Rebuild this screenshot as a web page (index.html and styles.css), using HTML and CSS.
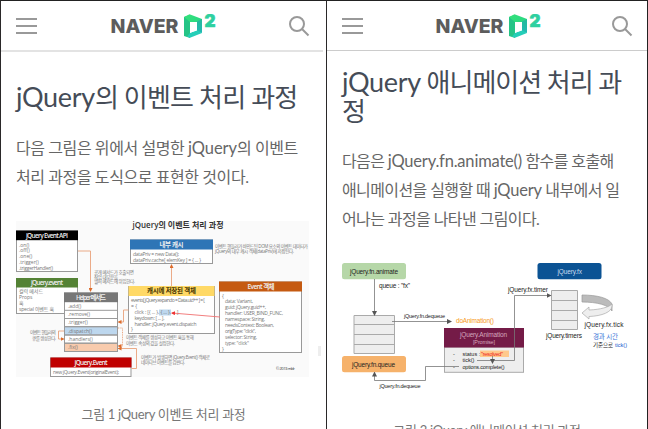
FILE: index.html
```html
<!DOCTYPE html>
<html lang="ko">
<head>
<meta charset="utf-8">
<title>NAVER D2</title>
<link rel="stylesheet" href="styles.css">
</head>
<body>
<svg class="defs" aria-hidden="true">
  <defs>
    <linearGradient id="gTop" x1="0" y1="0" x2="1" y2="0.3"><stop offset="0" stop-color="#35e27a"/><stop offset="1" stop-color="#2bd982"/></linearGradient>
    <linearGradient id="gSide" x1="0" y1="0" x2="0" y2="1"><stop offset="0" stop-color="#25ba99"/><stop offset="1" stop-color="#22b9b4"/></linearGradient>
    <symbol id="logo" viewBox="0 0 106 26">
      <text class="brand" x="0.500" y="19" textLength="68" lengthAdjust="spacingAndGlyphs">NAVER</text>
      <path fill="#25c486" d="M74 3l6-2v6.500l0 11.500 0 5-6-2z"/>
      <path fill="url(#gTop)" d="M74 3l5.500-2.800L92 5v3l-12 0z"/>
      <path fill="url(#gSide)" d="M87 7.500L92 5v14l-5-1.500z"/>
      <path fill="#25ceb8" d="M80 19l7-3 5 3-12 4.700-3-1.200z"/>
      <path fill="#fff" d="M80 8l7 1.500v7L80 18.800z"/>
      <text class="two" x="94.500" y="12.800" textLength="11" lengthAdjust="spacingAndGlyphs">2</text>
    </symbol>
    <symbol id="search" viewBox="0 0 22 22"><circle cx="9" cy="9" r="7"/><path d="M14 14l6.500 6.500"/></symbol>
    <marker id="mo" markerWidth="4" markerHeight="4" refX="3" refY="2" orient="auto" markerUnits="userSpaceOnUse"><path class="tip-o" d="M0 0l4 2-4 2z"/></marker>
    <marker id="mr" markerWidth="4" markerHeight="4" refX="3" refY="2" orient="auto" markerUnits="userSpaceOnUse"><path class="tip-r" d="M0 0l4 2-4 2z"/></marker>
    <marker id="mg" markerWidth="5" markerHeight="5" refX="4" refY="2.500" orient="auto" markerUnits="userSpaceOnUse"><path d="M0 0l5 2.500-5 2.500z" fill="#555"/></marker>
  </defs>
</svg>
<main class="phones">
  <section class="phone left">
    <header class="bar">
      <span class="menu"><i></i><i></i><i></i></span>
      <svg class="logo"><use href="#logo"/></svg>
      <svg class="search"><use href="#search"/></svg>
    </header>
    <article>
      <h2 class="h-one"><span class="en">jQuery</span>의 이벤트 처리 과정</h2>
      <p class="p-one"><span class="l1">다음 그림은 위에서 설명한 <span class="en">jQuery</span>의 이벤트</span><br><span class="l2">처리 과정을 도식으로 표현한 것이다.</span></p>
      <figure>
        <svg class="fig-one" viewBox="16 221 293 156">
          <rect x="16" y="221" width="293" height="156" fill="#fafafa"/>
          <text class="title" x="132.500" y="228.300" textLength="91" lengthAdjust="spacingAndGlyphs">jQuery의 이벤트 처리 과정</text>
          <g class="box">
            <rect x="16.500" y="231" width="61" height="40.500"/><rect x="16.500" y="278.500" width="61" height="35"/>
            <rect x="130.500" y="240" width="82" height="23.500"/><rect x="128.500" y="286.500" width="86" height="47"/>
            <rect x="219.500" y="282" width="82" height="70.500"/><rect x="50.500" y="358" width="80.500" height="18.500"/>
            <rect x="64.500" y="293" width="53" height="58.500"/>
            <rect class="blue" x="64.500" y="326.700" width="53" height="8.300"/><rect class="peach" x="64.500" y="343.200" width="53" height="8.300"/>
            <path d="M64.500 310.300h53M64.500 318.500h53M64.500 326.700h53M64.500 335h53M64.500 343.200h53"/>
          </g>
          <rect x="16" y="230.500" width="62" height="9.700" fill="#000"/>
          <rect x="16" y="278" width="62" height="9.500" fill="#548235"/>
          <rect x="64" y="292.500" width="54" height="9.700" fill="#777"/>
          <rect x="130" y="239.500" width="83" height="10" fill="#2e75b6"/>
          <rect x="128.500" y="286" width="86" height="10" fill="#ffd966"/>
          <rect x="219" y="281.500" width="83" height="10" fill="#c55a11"/>
          <rect x="50.500" y="357.500" width="81" height="10" fill="#c00000"/>
          <rect x="159" y="309.500" width="12" height="6" fill="#bdd7ee"/>
          <g class="head">
            <text x="47" y="237.500" textLength="42">jQuery Event API</text><text x="47" y="285" textLength="32">jQuery.event</text>
            <text x="91" y="299.500" textLength="30">Helper 메서드</text><text x="171.500" y="246.800" textLength="24">내부 캐시</text>
            <text x="171.500" y="293.200" textLength="49" class="dark">캐시에 저장된 객체</text><text x="261" y="288.700" textLength="27">Event 객체</text>
            <text x="91" y="364.800" textLength="33">jQuery.Event</text>
          </g>
          <g class="tiny">
            <text x="19" y="246.500">.on()</text><text x="19" y="252.300">.off()</text><text x="19" y="258">.one()</text><text x="19" y="263.800">.trigger()</text><text x="19" y="269.500" textLength="34">.triggerHandler()</text>
            <text x="19" y="293.300" textLength="24">컬럭 메서드</text><text x="19" y="299.300">Props</text><text x="19" y="305">훅</text><text x="19" y="311" textLength="35">special 이벤트 훅</text>
            <text x="68" y="307.800">.add()</text><text x="68" y="316.200">.remove()</text><text x="68" y="324.300">.trigger()</text><text x="68" y="332.500">.dispatch()</text><text x="68" y="340.800">.handlers()</text><text x="68" y="349">.fix()</text>
            <text x="133" y="255.500" textLength="46">dataPriv = new Data();</text><text x="133" y="261.500" textLength="68">dataPriv.cache[ elemKey ] = { ... }</text>
            <text x="131" y="302.300" textLength="74">events[ jQuery.expando = Data.uid++ ] = [</text><text x="131" y="308">= {</text><text x="134.500" y="314" textLength="45">click : [{ ... }, { ... }, ... ],</text><text x="134.500" y="319.700" textLength="30">keydown: [ ... ],</text><text x="134.500" y="325.500" textLength="62">handler: jQuery.event.dispatch</text><text x="131" y="331">}</text>
            <text x="222" y="297.500">{</text><text x="225" y="303.200" textLength="28">data: Variant,</text><text x="225" y="309" textLength="41">guid: jQuery.guid++,</text><text x="225" y="315" textLength="58">handler: USER_BIND_FUNC,</text><text x="225" y="321" textLength="40">namespace: String,</text><text x="225" y="327" textLength="49">needsContext: Boolean,</text><text x="225" y="333" textLength="31">origType: "click",</text><text x="225" y="339" textLength="32">selector: String,</text><text x="225" y="345" textLength="24">type: "click"</text><text x="222" y="351">}</text>
            <text x="53" y="374" textLength="66">new jQuery.Event(originalEvent);</text>
            <text x="276" y="370.300" textLength="19" class="strong">© 2013 mIdr</text>
          </g>
          <g class="note">
            <text x="94" y="273.500" textLength="40">공개 메서드가 호출되면</text><text x="94" y="278.500" textLength="24">작업 대부분을</text><text x="94" y="283" textLength="41">헬퍼 메서드에 위임한다.</text>
            <text x="215" y="247.500" textLength="93">이벤트 핸들러가 바인드된 DOM 요소의 이벤트 데이터가</text><text x="215" y="253" textLength="79">jQuery의 내부 캐시 객체(dataPriv)에 저장된다.</text>
            <text x="30" y="334" textLength="26">이벤트 핸들러의</text><text x="32" y="339.500" textLength="24">큐를 생성한다.</text>
            <text x="126" y="339" textLength="68">이벤트 객체를 생성하고 이벤트 훅을 통해</text><text x="126" y="344.500" textLength="49">이벤트 속성의 값을 설정한다.</text>
            <text x="141" y="358.500" textLength="69">이벤트가 발생하면 jQuery.Event() 객체로</text><text x="141" y="364" textLength="44">네이티브 이벤트를 감싼다.</text>
          </g>
          <g class="orange">
            <path d="M78 251h12.500v40"/><path d="M171.500 286v-21"/><path d="M128.500 310h-5v12h-5"/><path d="M64 331h-5.500v8h5"/><path stroke-dasharray="1 .7" d="M118 328h4.500v18h-4"/><path d="M131.500 368.500h5V348.500h-18"/>
            <path class="red" d="M220 317l-48-4"/>
          </g>
        </svg>
        <figcaption class="c-one">그림 1 jQuery 이벤트 처리 과정</figcaption>
      </figure>
    </article>
    <span class="thumb"></span>
  </section>
  <section class="phone right">
    <header class="bar">
      <span class="menu"><i></i><i></i><i></i></span>
      <svg class="logo"><use href="#logo"/></svg>
      <svg class="search"><use href="#search"/></svg>
    </header>
    <article>
      <h2 class="h-two"><span class="en">jQuery</span> 애니메이션 처리 과<br>정</h2>
      <p class="p-two"><span class="r1">다음은 <span class="en">jQuery.fn.animate()</span> 함수를 호출해</span><br><span class="r2">애니메이션을 실행할 때 <span class="en">jQuery</span> 내부에서 일</span><br><span class="r3">어나는 과정을 나타낸 그림이다.</span></p>
      <figure>
        <svg class="fig-two" viewBox="342 263 290 127">
          <rect x="342" y="263" width="64" height="16.300" rx="2.500" fill="#b6d7a8"/>
          <rect x="342" y="356" width="64" height="16.300" rx="2.500" fill="#f6b26b"/>
          <rect x="537.500" y="263" width="64" height="16.300" rx="2.500" fill="#0b5394"/>
          <g class="grid"><path d="M354 315.500h40.500v38h-40.500zM354 324.500h40.500M354 334.500h40.500M354 344.500h40.500"/><path d="M551.500 290.500h26v39h-26zM551.500 300.500h26M551.500 310.500h26M551.500 320.500h26"/></g>
          <rect x="444.500" y="347" width="79" height="25.300" fill="#eee" stroke="#aaa"/>
          <rect x="444" y="328" width="80" height="19.500" fill="#741b47"/>
          <rect x="480" y="350.500" width="29" height="6.500" fill="#ffc98b"/>
          <path d="M582 295c15 0 27 3 30 9v7c-3-6-15-9-30-9z" fill="#bbb" stroke="#999" stroke-width=".7"/>
          <path d="M612 306c0 6-10 10-23 10.500v2.500l-7-6 7-6v3c12-.5 20-3 23-6z" fill="#eee" stroke="#aaa" stroke-width=".7"/>
          <g class="wire"><path d="M374.500 279v36"/><path d="M392 321.500h59"/><path d="M459 366.500h-33.500v14h-51v-8"/><path d="M477 360.500h37.500v-65h36"/><path d="M492.500 356v7"/></g>
          <g class="lab">
            <text x="350" y="273.500" textLength="48">jQuery.fn.animate</text><text x="352" y="366.500" textLength="43">jQuery.fn.queue</text><text x="557.500" y="273.500" textLength="24.500" fill="#c8dcf0">jQuery.fx</text>
            <text x="379" y="288" textLength="31">queue : "fx"</text><text x="404" y="317.500" textLength="41" class="sm">jQuery.fn.dequeue</text><text x="379.500" y="387.500" textLength="41" class="sm">jQuery.fn.dequeue</text>
            <text x="456" y="323" textLength="38" class="do">doAnimation()</text><text x="508" y="291.500" textLength="40">jQuery.fx.timer</text><text x="546" y="337.500" textLength="36">jQuery.timers</text><text x="584.500" y="327" textLength="39">jQuery.fx.tick</text>
            <text x="460" y="337" textLength="47" class="pink">jQuery.Animation</text><text x="473" y="343.700" textLength="22" class="pink sm">[Promise]</text>
            <text class="sm" x="453" y="356">-</text><text class="sm" x="453" y="362.300">-</text><text class="sm" x="453" y="368.500">-</text>
            <text class="sm" x="462.500" y="356">status :</text><text class="sm red" x="481" y="356" textLength="22">"resolved"</text><text class="sm" x="462.500" y="362.300">tick()</text><text class="sm" x="462.500" y="368.700" textLength="42">options.complete()</text>
            <text x="593" y="339.300" textLength="25" fill="#3c78d8">경과 시간</text><text class="sm" x="593" y="347" textLength="20">기준으로</text><text class="sm" x="615" y="347" textLength="12" fill="#1155cc">tick()</text>
          </g>
        </svg>
        <figcaption class="c-two">그림 2 jQuery 애니메이션 처리 과정</figcaption>
      </figure>
    </article>
  </section>
</main>
</body>
</html>
```

FILE: styles.css
```css
* { box-sizing: border-box; }
body { margin: 0; width: 648px; height: 429px; overflow: hidden; background: #fff; font-family: Lato, "Noto Sans CJK KR", sans-serif; }
.defs { position: absolute; width: 0; height: 0; }
.phones { display: grid; grid-template-columns: 326px 322px; height: 429px; }
.phone { position: relative; height: 429px; overflow: hidden; border-top: 1px solid #222; border-left: 1px solid #2a2829; }
.right { border-right: 1px solid #222; }
.bar { display: flex; align-items: flex-start; height: 51px; padding: 13px 15px 0; border-bottom: 2px solid #e3e3e3; }
.left .bar { width: 322px; padding-right: 13px; }
.right .bar { height: 50px; padding-right: 14px; border-bottom: 1px solid #ccc; }
.menu { display: flex; flex-direction: column; gap: 5px; width: 21px; margin-top: 4px; }
.menu i { height: 2px; background: #999; }
.logo { width: 106px; height: 26px; margin-left: 73px; }
.right .logo { margin-left: 72px; }
.search { width: 22px; height: 22px; margin-left: auto; margin-top: 1px; fill: none; stroke: #999; stroke-width: 2; }
.brand { font: 800 19px Inter, sans-serif; fill: #5c5c5c; }
.two { font: 900 17px Inter, sans-serif; fill: #2fd0a0; stroke: #2fd0a0; stroke-width: .6; }
article { padding: 0 15px; }
h2 { margin: 0; font-weight: 400; color: #454c57; white-space: nowrap; font-size: 26px; line-height: 29px; }
.en { line-height: 1; }
.h-one { padding-top: 31px; letter-spacing: -.8px; }
.h-two { padding-top: 17px; letter-spacing: -1px; }
h2 .en { font-size: 27px; letter-spacing: -.3px; }
p { margin: 0; color: #666; font-size: 16px; line-height: 29px; white-space: nowrap; letter-spacing: -.42px; }
p .en { font-size: 16.500px; letter-spacing: -.05px; }
.p-one { padding-top: 21px; }
.p-two { padding-top: 20px; letter-spacing: -.6px; }
.p-two .en { letter-spacing: -.2px; }
figure { margin: 0; }
figure svg { display: block; }
.fig-one { width: 293px; height: 156px; margin-top: 30px; }
.fig-two { width: 290px; height: 127px; margin-top: 30px; }
figcaption { text-align: center; font-size: 13px; line-height: 20px; color: #777; letter-spacing: -.3px; white-space: nowrap; }
.c-one { padding-top: 27px; }
.c-two { padding-top: 30px; }
.thumb { position: absolute; left: 317px; top: 345px; width: 3px; height: 10px; background: #eee; }
.fig-one text { font-family: "Open Sans", "Noto Sans CJK KR", sans-serif; }
.title { font-size: 8.500px; font-weight: 600; fill: #333; }
.box * { fill: #fff; stroke: #999; stroke-width: 1; }
.box path { fill: none; }
.box .blue { fill: #bdd7ee; }
.box .peach { fill: #f8cbad; }
.head { font-size: 6.500px; font-weight: 600; fill: #eee; text-anchor: middle; }
.head .dark { fill: #443300; }
.tiny { font-size: 5px; fill: #777; }
.tiny .strong { font-size: 4px; fill: #333; }
.note { font-size: 4.500px; fill: #777; }
.orange path { fill: none; stroke: #e9a27a; stroke-width: .9; marker-end: url(#mo); }
.orange .red { stroke: #f07070; marker-end: url(#mr); }
.tip-o { fill: #dd6b2a; }
.tip-r { fill: #e33; }
.grid path { fill: #eee; stroke: #aaa; stroke-width: 1; }
.wire path { fill: none; stroke: #777; stroke-width: .8; marker-end: url(#mg); }
.lab { font-family: "Liberation Sans", "Noto Sans CJK KR", sans-serif; font-size: 6.500px; fill: #222; }
.lab .sm { font-size: 5.500px; }
.lab .do { fill: #f79a20; }
.lab .pink { fill: #d5a6bd; }
.lab .red { fill: #e22; }
```
